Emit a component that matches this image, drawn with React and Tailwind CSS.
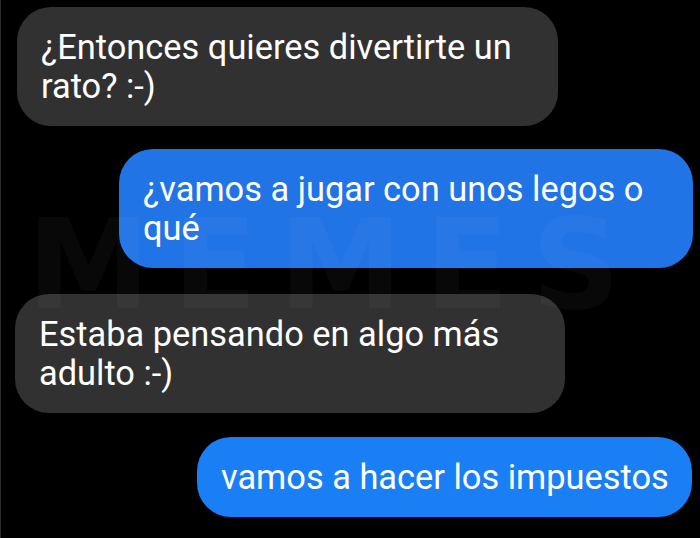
import React from 'react';

const messages = [
  { id: 1, mine: false, text: '¿Entonces quieres divertirte un rato? :-)', cls: 'ml-[16px] w-[541px] mt-[7px]' },
  { id: 2, mine: true, text: '¿vamos a jugar con unos legos o qué', cls: 'mr-[7px] w-[574px] mt-[23px] bg-[#2174e6]' },
  { id: 3, mine: false, text: 'Estaba pensando en algo más adulto :-)', cls: 'ml-[14px] w-[550px] mt-[26px]' },
  { id: 4, mine: true, text: 'vamos a hacer los impuestos', cls: 'mr-[8px] w-[495px] mt-[24px] whitespace-nowrap bg-[#1a7ff4]' },
];

export default function App() {
  return (
    <div className="relative w-[700px] h-[538px] overflow-hidden bg-black border-l border-[#2c2c2c] font-['Roboto',sans-serif]">
      <div className="flex flex-col">
        {messages.map((m) => (
          <div
            key={m.id}
            className={`${m.mine ? 'self-end' : 'self-start bg-[#313131]'} ${m.cls} rounded-[34px] pl-[24px] pr-[20px] pt-[21px] pb-[20px] text-white text-[34.4px] leading-[39px]`}
          >
            {m.text}
          </div>
        ))}
      </div>

      {/* watermark */}
      <div className="pointer-events-none absolute left-[26px] top-[190px] text-[124px] leading-[150px] font-bold tracking-[22px] text-white/[0.03] font-['DejaVu_Sans',sans-serif]">
        MEMES
      </div>
    </div>
  );
}
